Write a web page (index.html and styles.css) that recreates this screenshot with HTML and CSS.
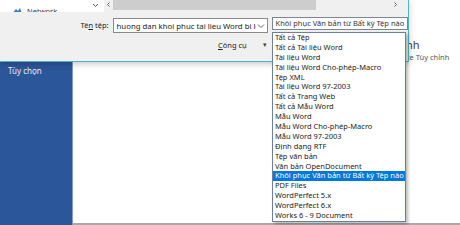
FILE: index.html
```html
<!DOCTYPE html>
<html lang="vi">
<head>
<meta charset="utf-8">
<title>Lưu tệp</title>
<link rel="stylesheet" href="styles.css">
</head>
<body>
<div class="screen">
  <aside class="sidebar">
    <div class="side-item">Tùy chọn</div>
  </aside>
  <main class="content">
    <div class="content-title">nh</div>
    <div class="content-sub">ze Tùy chỉnh</div>
  </main>

  <div class="dialog">
    <div class="topstrip">
      <div class="navpane">
        <svg class="net-icon" width="10" height="8" viewBox="0 0 10 8"><path d="M0 8 L4 3 L6 5 L8 2 L10 8 Z" fill="#3a78c2"/></svg>
        <span class="net-label">Network</span>
        <svg class="chev" width="7" height="5" viewBox="0 0 7 5"><path d="M1 1 L3.5 3.5 L6 1" fill="none" stroke="#555" stroke-width="1"/></svg>
      </div>
      <div class="hscroll">
        <svg class="arrow" width="9" height="10" viewBox="0 0 9 10"><path d="M5.5 2.5 L3.5 4.5 L5.5 6.5" fill="none" stroke="#606060" stroke-width="1"/></svg>
        <span class="thumb"></span>
        <span class="track"><svg class="arrow" width="9" height="10" viewBox="0 0 9 10"><path d="M3.5 2.5 L5.5 4.5 L3.5 6.5" fill="none" stroke="#606060" stroke-width="1"/></svg></span>
      </div>
    </div>
    <div class="filerow">
      <label class="fname-label">Tê<u>n</u> tệp:</label>
      <div class="fname-input"><span class="fname-text">huong dan khoi phuc tai lieu Word bi loi</span><svg class="dd" width="10" height="6" viewBox="0 0 10 6"><path d="M2 1.5 L5 4.5 L8 1.5" fill="none" stroke="#666" stroke-width="1"/></svg></div>
      <div class="filter-combo">Khôi phục Văn bản từ Bất kỳ Tệp nào</div>
    </div>
    <div class="toolsrow">
      <span class="tools"><u>C</u>ông cụ</span>
      <span class="tools-caret">&#9662;</span>
    </div>
  </div>

  <ul class="droplist">
    <li>Tất cả Tệp</li>
    <li>Tất cả Tài liệu Word</li>
    <li>Tài liệu Word</li>
    <li>Tài liệu Word Cho-phép-Macro</li>
    <li>Tệp XML</li>
    <li>Tài liệu Word 97-2003</li>
    <li>Tất cả Trang Web</li>
    <li>Tất cả Mẫu Word</li>
    <li>Mẫu Word</li>
    <li>Mẫu Word Cho-phép-Macro</li>
    <li>Mẫu Word 97-2003</li>
    <li>Định dạng RTF</li>
    <li>Tệp văn bản</li>
    <li>Văn bản OpenDocument</li>
    <li class="selected">Khôi phục Văn bản từ Bất kỳ Tệp nào</li>
    <li>PDF Files</li>
    <li>WordPerfect 5.x</li>
    <li>WordPerfect 6.x</li>
    <li>Works 6 - 9 Document</li>
  </ul>
</div>
</body>
</html>
```
FILE: styles.css
```css
* { box-sizing: border-box; }
html, body { margin: 0; padding: 0; }
body {
  width: 460px;
  height: 225px;
  overflow: hidden;
  background: #fff;
  font-family: "Noto Sans", "Open Sans", sans-serif;
  font-size: 7.5px;
  color: #1b1b1b;
}
.screen {
  position: relative;
  width: 460px;
  height: 225px;
  display: grid;
  grid-template-columns: 73px 1fr;
}
.sidebar {
  background: #2b579a;
  border-right: 1px solid #7f9ccb;
  padding-top: 65px;
}
.side-item {
  color: #e9eef7;
  font-size: 8px;
  padding-left: 8px;
  line-height: 12px;
}
.content {
  border-bottom: 2px solid #a9a9a9;
  padding-top: 38px;
  padding-left: 333px;
  background: #fff;
}
.content-title {
  font-size: 11px;
  line-height: 13px;
  color: #3b3b3b;
}
.content-sub {
  font-size: 7.5px;
  line-height: 12px;
  color: #555;
  white-space: nowrap;
}

.dialog {
  position: absolute;
  left: 0;
  top: 0;
  width: 409px;
  height: 62px;
  background: #f0f0f0;
  border-right: 1px solid #4fb3c6;
  border-bottom: 1px solid #4fb3c6;
  box-shadow: 0 2px 6px rgba(0,0,0,0.22);
  display: flex;
  flex-direction: column;
}
.topstrip {
  height: 12px;
  display: flex;
}
.navpane {
  width: 104px;
  background: #fff;
  overflow: hidden;
  display: flex;
  align-items: flex-start;
}
.net-icon {
  margin: 6px 0 0 12px;
  flex: none;
}
.net-label {
  margin: 7px 0 0 5px;
  font-size: 7.5px;
  line-height: 9px;
  color: #333;
  white-space: nowrap;
}
.chev {
  margin: 3px 5px 0 auto;
  flex: none;
}
.hscroll {
  width: 296px;
  display: flex;
  align-items: stretch;
  background: #f0f0f0;
  height: 10px;
}
.arrow {
  flex: none;
  display: block;
}
.thumb {
  width: 203px;
  background: #cdcdcd;
}
.track {
  flex: 1;
  display: flex;
  justify-content: flex-end;
}
.filerow {
  margin-top: 5px;
  height: 15px;
  display: flex;
  align-items: flex-start;
}
.fname-label {
  width: 111px;
  padding-right: 2px;
  text-align: right;
  line-height: 15px;
  padding-top: 1px;
  color: #222;
}
.fname-input {
  width: 155px;
  height: 15px;
  margin-left: 2px;
  margin-top: 1px;
  background: #fff;
  border: 1px solid #8a8a8a;
  display: flex;
  align-items: center;
  padding-left: 3px;
}
.fname-text {
  flex: 1;
  white-space: nowrap;
  overflow: hidden;
  font-size: 7.8px;
}
.dd {
  flex: none;
  margin-right: 1px;
}
.filter-combo {
  width: 137px;
  height: 13px;
  margin-left: 4px;
  background: #fff;
  border: 1px solid #7a8699;
  line-height: 11px;
  padding-left: 3px;
  white-space: nowrap;
  overflow: hidden;
  color: #333;
}
.toolsrow {
  margin-top: 8px;
  display: flex;
  align-items: center;
  padding-left: 218px;
  line-height: 10px;
}
.tools { color: #222; }
.tools-caret {
  margin-left: 16px;
  font-size: 7px;
  color: #444;
}

.droplist {
  position: absolute;
  left: 272px;
  top: 32px;
  width: 134px;
  margin: 0;
  padding: 0;
  list-style: none;
  background: #fff;
  border: 1px solid #6d7f9c;
  box-shadow: 2px 2px 3px rgba(0,0,0,0.28);
}
.droplist li {
  height: 9.9px;
  line-height: 9.9px;
  padding-left: 2px;
  white-space: nowrap;
  overflow: hidden;
  color: #1b1b1b;
}
.droplist li.selected {
  background: #0078d7;
  color: #fff;
}
```
